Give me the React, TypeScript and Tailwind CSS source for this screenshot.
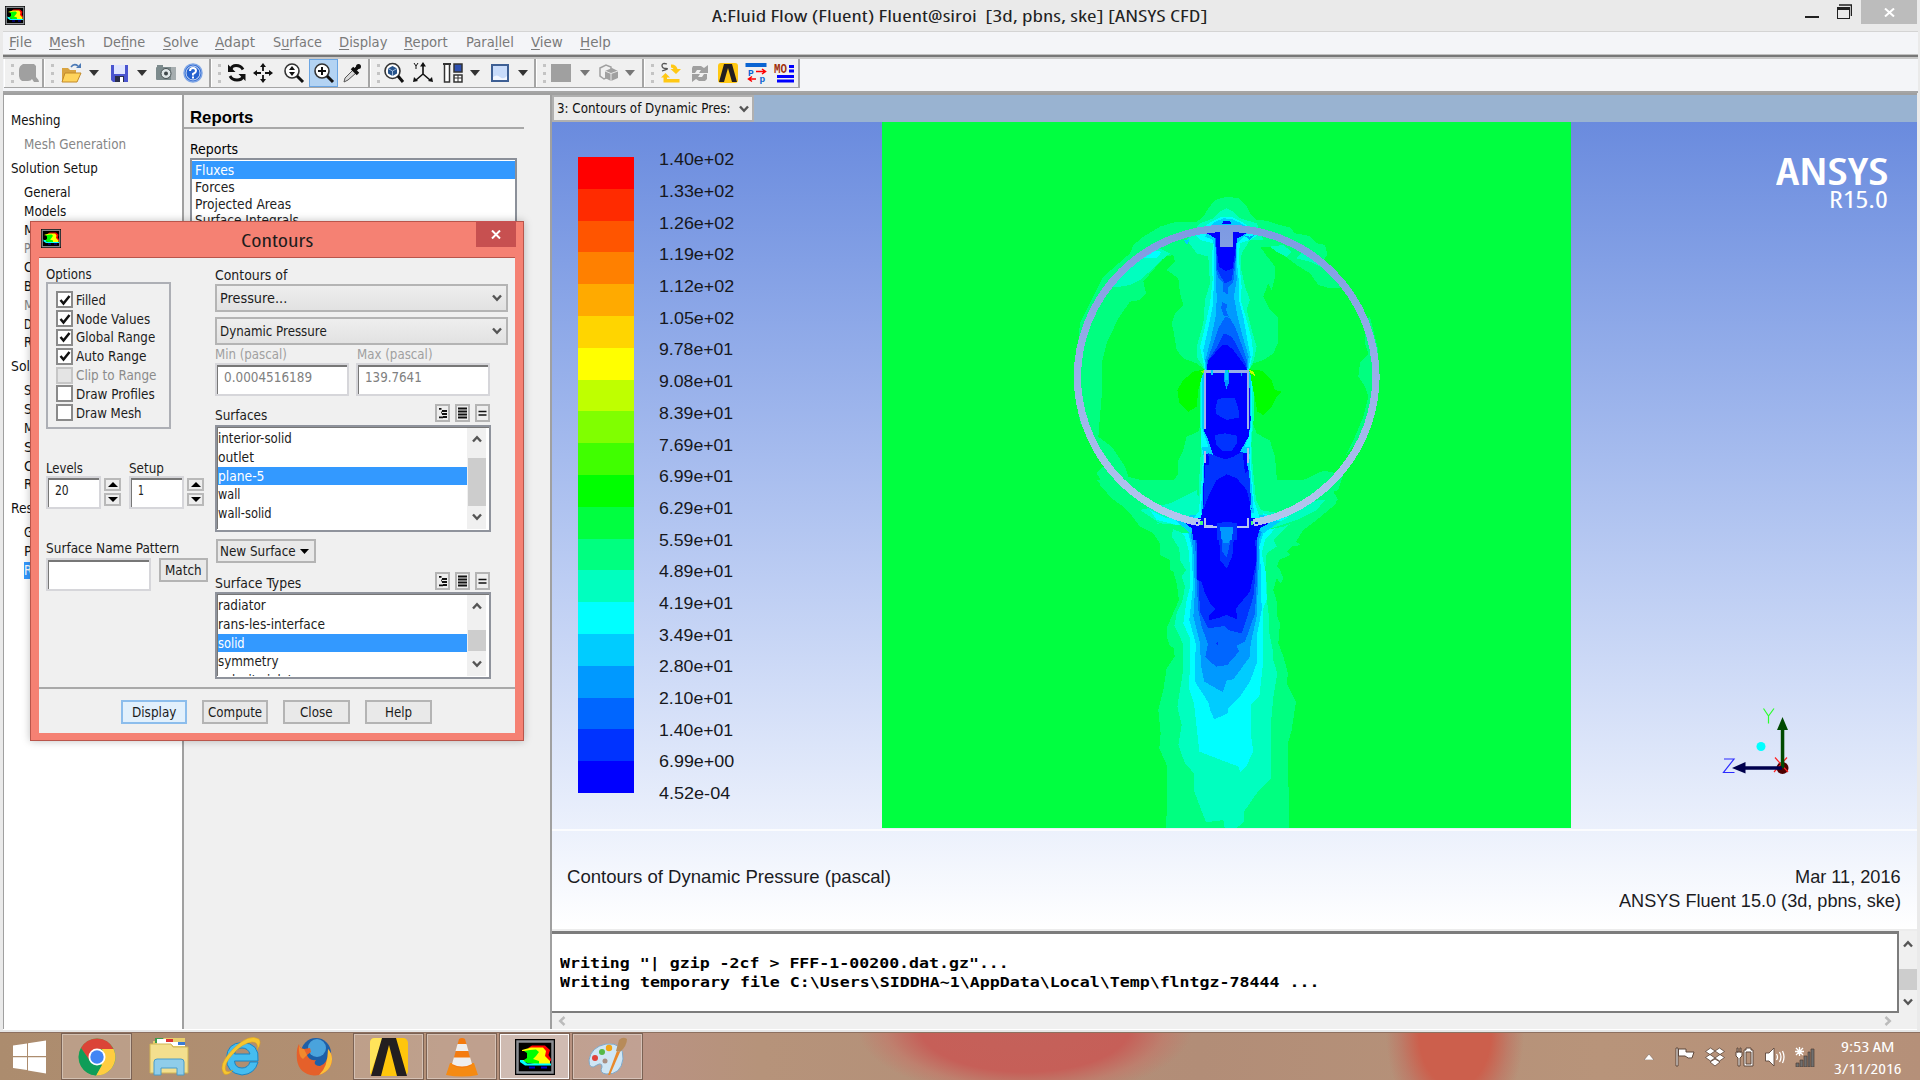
import { useLayoutEffect, useRef, useState, type ReactNode } from 'react';

const UI = 'font-["DejaVu_Sans_Condensed","DejaVu_Sans",sans-serif] [font-stretch:condensed]';

/* Single-line label fitted to a given width. */
function T({ w, className = '', children }: { w: number; className?: string; children: ReactNode }) {
  const ref = useRef<HTMLSpanElement>(null);
  const [s, setS] = useState(1);
  useLayoutEffect(() => {
    if (ref.current) setS(w / ref.current.offsetWidth);
  }, [w]);
  return (
    <span className={`block shrink-0 whitespace-pre ${className}`} style={{ width: w }}>
      <span ref={ref} className="inline-block origin-left" style={{ transform: `scaleX(${s})` }}>
        {children}
      </span>
    </span>
  );
}

function FluentIcon({ className }: { className: string }) {
  return (
    <svg viewBox="0 0 40 36" preserveAspectRatio="none" className={className}>
      <rect width="40" height="36" fill="#000" />
      <rect x="2.5" y="2.5" width="35" height="31" fill="none" stroke="#8a8d92" strokeWidth="2.5" />
      <path d="M13 9L17 6.500H30L35 11 33.500 16 36 20V22L28 24V9Z" fill="#f00" />
      <path d="M7 11L16 8.500 28 8.500 31 12 30 17 35 22V25L24 26 7 22Z" fill="#ff0" />
      <path d="M9 12L15 11 21 10.500 24 13 21 17 18 20 24 22 24 25 12 24 7 20Z" fill="#0f0" />
      <path d="M5 19L9 22 12 24.500 36 24.500 36 26.500 10 26.500 5 23Z" fill="#0ff" />
      <path d="M5 12H9L12 14V19L9 21H5Z" fill="#000" />
      <path d="M14 28.500h6M26 28.500h6" stroke="#00c" strokeWidth="2" />
    </svg>
  );
}

const MENU: [string, number, number, number][] = [
  ['File', 0, 23, 17], ['Mesh', 0, 36, 18], ['Define', 2, 42, 18], ['Solve', 0, 35, 17], ['Adapt', 0, 40, 18],
  ['Surface', 1, 49, 17], ['Display', 0, 48, 17], ['Report', 0, 44, 18], ['Parallel', 4, 48, 17], ['View', 0, 32, 17], ['Help', 0, 31, 0],
];

const Grip = () => (
  <div className="flex w-[15px] shrink-0 flex-col items-center gap-[5px] border-l border-white pt-[5px]">
    <i className="size-[3px] bg-[#c4c4c4]" /><i className="size-[3px] bg-[#c4c4c4]" /><i className="size-[3px] bg-[#c4c4c4]" />
  </div>
);
const Cell = ({ w, children, className = '' }: { w: number; children: ReactNode; className?: string }) => (
  <div className={`flex shrink-0 items-center justify-center ${className}`} style={{ width: w }}>{children}</div>
);
const Drop = ({ w, c = '#333' }: { w: number; c?: string }) => (
  <Cell w={w}><svg viewBox="0 0 10 6" className="h-[6px] w-[10px]"><path d="M0 0H10L5 6Z" fill={c} /></svg></Cell>
);
const Group = ({ w, children }: { w: number; children: ReactNode }) => (
  <div className="flex shrink-0 border-r-2 border-b border-[#a5a5a5] bg-[#f0f0f0]" style={{ width: w }}><Grip />{children}</div>
);
const Ic = ({ children }: { children: ReactNode }) => (
  <svg viewBox="0 0 20 20" className="size-[20px] shrink-0 overflow-visible">{children}</svg>
);

function Toolbar() {
  return (
    <div className="flex h-[29px] shrink-0 pl-[1px]">
      <Group w={40}>
        <Cell w={20}><Ic><path d="M4 1H15L17 3V14Q20 17 20 19H15L13 16Q12 18 9 18H3Q0 16 0 13V7Q0 3 4 1Z" fill="#a0a0a0" /></Ic></Cell>
      </Group>
      <Group w={167}>
        <Cell w={24}><Ic><path d="M1 5H7L9 7H15V18H1Z" fill="#d9a441" /><path d="M4 10H20L16 19H1Z" fill="#ffd45c" stroke="#c28a2a" /><path d="M10 4Q13 0 17 3" stroke="#4b79b5" strokeWidth="1.6" fill="none" /><path d="M15 5H20V0Z" fill="#4b79b5" /></Ic></Cell>
        <Drop w={22} />
        <Cell w={27}><Ic><path d="M2 2H19V19H4L2 17Z" fill="#4a55cf" /><rect x="5" y="2" width="11" height="9" fill="#dfe5ff" /><rect x="6" y="13" width="9" height="6" fill="#2b2f4a" /><rect x="11" y="14" width="3" height="5" fill="#fff" /></Ic></Cell>
        <Drop w={20} />
        <Cell w={27}><Ic><rect x="0" y="4" width="20" height="13" rx="1" fill="#7d8b8d" /><rect x="1" y="2" width="6" height="3" fill="#7d8b8d" /><rect x="15" y="4" width="5" height="13" fill="#a6adaf" /><circle cx="10" cy="10.500" r="5" fill="#dfe6e8" stroke="#495254" /><circle cx="10" cy="10.500" r="2" fill="#3f474a" /></Ic></Cell>
        <Cell w={28}><Ic><circle cx="10" cy="10" r="9" fill="#2462cf" stroke="#7fa6e6" strokeWidth="1.500" /><circle cx="10" cy="10" r="7" fill="none" stroke="#fff" strokeWidth=".8" /><path d="M7 8Q7 5 10 5T13 8Q13 9.500 10 11V12.500" fill="none" stroke="#fff" strokeWidth="2" /><rect x="9" y="13.500" width="2" height="2" fill="#fff" /></Ic></Cell>
      </Group>
      <Group w={159}>
        <Cell w={21}><Ic><path d="M16 6.500Q14 2.500 9 2.500Q5 2.500 4 6M3 13Q5 17 10 17Q15 17 16 13.500" fill="none" stroke="#111" strokeWidth="2.800" /><path d="M1 1.500V9H8.500ZM18.500 18V11H11.500Z" fill="#111" /></Ic></Cell>
        <Cell w={32}><Ic><path d="M10 3V8M10 12V17M3 10H8M12 10H17" stroke="#111" strokeWidth="1.800" /><path d="M10 0L13 4H7ZM10 20L7 16H13ZM0 10L4 7V13ZM20 10L16 7V13Z" fill="#111" /></Ic></Cell>
        <Cell w={30}><Ic><circle cx="8" cy="8" r="7" fill="#fff" stroke="#333" strokeWidth="1.600" /><path d="M13 13L19 19" stroke="#111" strokeWidth="3" /><path d="M8 3L11 7H5ZM8 13L5 9H11Z" fill="#111" /></Ic></Cell>
        <Cell w={29} className="border border-[#6aa5e3] bg-[#b3d3f3]"><Ic><circle cx="8" cy="8" r="7" fill="#fff" stroke="#333" strokeWidth="1.600" /><path d="M13 13L19 19" stroke="#111" strokeWidth="3" /><path d="M8 4V12M4 8H12" stroke="#111" strokeWidth="2" /></Ic></Cell>
        <Cell w={28}><Ic><path d="M2 19L3 15 11 7 14 10 6 17Z" fill="#d9d9d9" stroke="#555" /><path d="M10 5L16 11M12 8L16 4" stroke="#111" strokeWidth="3.500" /><circle cx="16.500" cy="3.500" r="2.500" fill="#111" /></Ic></Cell>
      </Group>
      <Group w={166}>
        <Cell w={18}><Ic><circle cx="8.500" cy="8" r="7.500" fill="#fff" stroke="#333" strokeWidth="1.600" /><path d="M14 13L19 19" stroke="#111" strokeWidth="3" /><path d="M8.500 3L13 5.500V10.500L8.500 13 4 10.500V5.500Z" fill="#27548c" /><path d="M4 5.500L8.500 8 13 5.500M8.500 8V13" stroke="#bcd3ef" strokeWidth=".8" fill="none" /></Ic></Cell>
        <Cell w={40}><Ic><path d="M10 1V11M10 11L3 17M10 11L17 17" stroke="#111" strokeWidth="1.600" fill="none" /><path d="M10-1L13 3.500H7ZM0 19L1 14 5 18ZM20 19L19 14 15 18Z" fill="#111" /><path d="M1 0L3 3 5 0M3 3V6" stroke="#111" fill="none" /></Ic></Cell>
        <Cell w={20}><Ic><rect x="1.500" y="1" width="5" height="18" fill="#fff" stroke="#333" strokeWidth="1.500" /><path d="M0 1H8" stroke="#333" strokeWidth="2" /><rect x="11" y="1" width="8" height="8" fill="#2d4faf" stroke="#333" strokeWidth="1.500" /><rect x="11" y="12" width="8" height="7" fill="#fff" stroke="#333" strokeWidth="1.500" /><path d="M15 12V19M11 15H19" stroke="#333" /></Ic></Cell>
        <Drop w={24} />
        <Cell w={26}><svg viewBox="0 0 18 18" className="size-[18px]"><rect x="1" y="1" width="16" height="16" fill="#c9dcfb" stroke="#3e5f94" strokeWidth="2" /><path d="M2 13Q6 10 9 13T16 12V16H2Z" fill="#f2f6ff" /></svg></Cell>
        <Drop w={20} />
      </Group>
      <Group w={108}>
        <Cell w={20}><i className="h-[18px] w-[20px] shrink-0 bg-[#a0a0a0]" /></Cell>
        <Drop w={28} c="#777" />
        <Cell w={20}><Ic><path d="M1 5L7 2 12 4V13L5 16 1 13Z" fill="none" stroke="#a0a0a0" strokeWidth="1.500" /><path d="M6 8L13 5 19 8V15L12 18 6 15Z" fill="#a0a0a0" /><path d="M6 8L12 10.500 19 8M12 10.500V18" stroke="#e8e8e8" fill="none" /></Ic></Cell>
        <Drop w={22} c="#777" />
      </Group>
      <Group w={156}>
        <Cell w={23}><Ic><path d="M10 1.500Q15 1 16.500 6L20 6 15 11 9.500 6H12.500Q12 4.500 10 4.500Z" fill="#ffc814" /><path d="M0 14.500L4.500 10 9 14.500H6V16H18.500V19.500H2.500V14.500Z" fill="#ffc814" /><path d="M6 1Q1-.5 1 2.500T5 5.500 1 8" stroke="#555" fill="none" strokeWidth="1.300" /></Ic></Cell>
        <Cell w={35}><Ic><path d="M3 3H11L14 5 18 2V10H9L11 7H7L5 10H2V5ZM17 11V16L15 18H9L6 16 2 19V11H10L8 14H12L14 11Z" fill="#a0a0a0" /></Ic></Cell>
        <Cell w={22}><Ic><rect width="20" height="20" rx="3" fill="#ffc814" /><path d="M1 19L6 1H14L19 19H14L10 5 6 19Z" fill="#231f20" /></Ic></Cell>
        <Cell w={34}><Ic><rect x="-.5" width="21" height="4" fill="#0a64d2" /><text x="2" y="13" fontSize="9.500" fontWeight="bold" fill="#0a64d2" fontFamily="Liberation Mono">P</text><text x="13.500" y="19" fontSize="9.500" fontWeight="bold" fill="#0a64d2" fontFamily="Liberation Mono">p</text><path d="M10 8.500H19M16 6L19.500 8.500 16 11M10 16H3M6 13.500L2.500 16 6 18.500" stroke="#f00" strokeWidth="1.500" fill="none" /></Ic></Cell>
        <Cell w={24}><Ic><text x="-1" y="9.500" fontSize="13" fontWeight="bold" fill="#a02f0c" fontFamily="Liberation Mono" textLength="13" lengthAdjust="spacingAndGlyphs">MO</text><path d="M14 3.500H19M14 8H19M2 13.500H19M2 18H19" stroke="#00f" strokeWidth="3" /></Ic></Cell>
      </Group>
    </div>
  );
}

/* [label, level, state] */
const TREE: [string, number, string?][] = [
  ['Meshing', 0], ['Mesh Generation', 1, 'off'], ['Solution Setup', 0], ['General', 1], ['Models', 1], ['Materials', 1], ['Phases', 1, 'off'],
  ['Cell Zone Conditions', 1], ['Boundary Conditions', 1], ['Mesh Interfaces', 1, 'off'], ['Dynamic Mesh', 1], ['Reference Values', 1],
  ['Solution', 0], ['Solution Methods', 1], ['Solution Controls', 1], ['Monitors', 1], ['Solution Initialization', 1],
  ['Calculation Activities', 1], ['Run Calculation', 1], ['Results', 0], ['Graphics and Animations', 1], ['Plots', 1], ['Reports', 1, 'sel'],
];
const TREE_W: Record<string, number> = { Meshing: 49, 'Mesh Generation': 102, 'Solution Setup': 87, General: 47, Models: 42 };

function Tree() {
  return (
    <div className="w-[179px] shrink-0 overflow-hidden border-t-2 border-l border-[#a0a0a0] bg-white pt-[11px]">
      {TREE.map(([t, lv, st], i) => (
        <div key={i} className={`flex items-center ${lv ? 'h-[18.800px] pl-[19.500px]' : 'h-[29.200px] pl-[7px]'}`}>
          <T w={TREE_W[t] ?? t.length * 6.3} className={`leading-[17px] ${st === 'off' ? 'text-[#868686]' : st === 'sel' ? 'bg-[#3399ff] text-white' : 'text-[#111]'}`}>{t}</T>
        </div>
      ))}
    </div>
  );
}

function ReportsPanel() {
  return (
    <div className="flex w-[368px] shrink-0 flex-col overflow-hidden border-t-2 border-l-2 border-[#a0a0a0] bg-[#f0f0f0]">
      <div className="mr-[26px] flex h-[34px] items-center border-b-2 border-[#a8a8a8] pt-[12px] pl-[6px]">
        <T w={63} className={'font-["Liberation_Sans",sans-serif] text-[16.500px] leading-[20px] font-bold text-black'}>Reports</T>
      </div>
      <div className="flex h-[29px] items-end pl-[6px]"><T w={48} className="leading-[18px]">Reports</T></div>
      <div className="ml-[6px] h-[90px] w-[327px] border-2 border-[#8b9099] bg-white pt-px text-[#222]">
        <div className="h-[18px] bg-[#3399ff] pl-[3px] leading-[19px] text-white"><T w={39}>Fluxes</T></div>
        <div className="h-[16.500px] pl-[3px] leading-[17px]"><T w={40}>Forces</T></div>
        <div className="h-[16.500px] pl-[3px] leading-[17px]"><T w={96}>Projected Areas</T></div>
        <div className="h-[16.500px] pl-[3px] leading-[16px]"><T w={104}>Surface Integrals</T></div>
      </div>
    </div>
  );
}

const COLORS = ['#ff0000', '#ff2b00', '#ff5500', '#ff8000', '#ffaa00', '#ffd500', '#ffff00', '#bfff00', '#80ff00', '#40ff00', '#00ff00', '#00ff40', '#00ff80', '#00ffbf', '#00ffff', '#00ccff', '#0099ff', '#0066ff', '#0033ff', '#0000ff'];
const VALUES = ['1.40e+02', '1.33e+02', '1.26e+02', '1.19e+02', '1.12e+02', '1.05e+02', '9.78e+01', '9.08e+01', '8.39e+01', '7.69e+01', '6.99e+01', '6.29e+01', '5.59e+01', '4.89e+01', '4.19e+01', '3.49e+01', '2.80e+01', '2.10e+01', '1.40e+01', '6.99e+00', '4.52e-04'];

const P = ({ f, d }: { f: string; d: string }) => <polygon fill={f} points={d} />;
const c1 = '#00ff80', c2 = '#00ffbf', c3 = '#00ffff', c4 = '#00ccff', c5 = '#0099ff', c6 = '#0066ff', c7 = '#0033ff', c8 = '#0000ff';

function Plot() {
  return (
    <svg viewBox="881 122 690 707" className="h-[707px] w-[690px] shrink-0" shapeRendering="crispEdges">
      <defs>
        <linearGradient id="sky" gradientUnits="userSpaceOnUse" x1="0" y1="-204" x2="0" y2="2221">
          <stop offset="0" stopColor="#6a8bde" /><stop offset="1" stopColor="#fff" />
        </linearGradient>
      </defs>
      <rect x="881.500" y="122" width="690" height="706" fill="#00ff40" />
      {/* wake below the body */}
      <g transform="translate(1130 500) scale(.33333)">
        <P f={c1} d="-100,-60 0,40 30,80 70,100 90,130 90,165 120,180 120,210 130,215 140,250 147,300 125,350 110,385 110,410 118,435 132,445 134,470 110,505 100,570 85,630 92,700 88,745 110,795 110,940 107,984 477,984 474,730 485,690 498,605 470,550 474,520 460,470 445,430 450,370 440,345 442,310 430,270 440,235 452,250 460,235 450,210 440,200 448,180 480,165 470,155 485,140 512,135 498,125 520,90 560,60 620,10 600,-60" />
        <P f={c2} d="60,30 80,70 130,85 125,110 148,145 150,180 168,210 155,230 165,260 158,300 140,340 133,378 145,400 158,430 158,520 142,620 155,675 145,735 165,790 192,820 192,872 228,967 280,960 284,984 320,984 342,965 342,935 380,880 422,838 422,680 430,590 442,520 430,480 428,450 418,400 417,350 412,310 410,250 405,215 410,160 440,140 430,120 470,80 510,50 500,0" />
        <P f={c3} d="110,50 150,95 165,110 178,160 180,260 170,300 160,370 180,415 178,570 192,610 208,755 326,800 330,817 348,800 370,755 362,700 362,615 388,590 400,480 400,370 398,330 410,300 408,220 395,160 405,120 440,80 460,50" />
        <P f={c4} d="140,60 175,100 187,150 188,270 178,360 197,430 195,545 237,610 240,630 253,658 293,640 293,625 330,590 360,545 380,490 382,400 395,330 392,200 388,140 400,100 430,60" />
        <P f={c5} d="160,65 182,100 190,150 195,270 190,350 210,430 213,495 223,545 278,576 290,542 310,538 360,470 362,430 380,350 386,200 386,120 410,65" />
        <P f={c6} d="175,70 195,110 200,250 205,330 215,380 234,432 226,472 258,500 292,495 327,455 320,437 345,425 375,340 382,220 382,110 400,70" />
        <P f={c7} d="182,75 198,100 206,250 210,335 235,385 285,378 295,390 335,400 350,355 370,290 380,180 380,100 390,75" />
        <P f={c8} d="185,70 200,105 202,240 215,245 225,280 240,310 257,328 238,345 238,360 262,355 290,345 322,358 318,325 360,275 378,190 375,80" />
        <P f={c7} d="258,75 268,120 270,180 290,205 307,170 310,130 318,75" />
        <P f={c6} d="266,82 275,110 277,155 290,172 300,130 308,82" />
        <P f={c5} d="275,80 280,128 298,130 302,80" />
        <P f={c7} d="257,430 264,426 264,438" />
      </g>
      <g transform="translate(1050 190) scale(.33333)">
        {/* outer shear regions */}
        <P f={c1} d="440,95 460,80 475,55 495,30 530,20 565,25 588,45 600,70 618,90 650,92 690,105 720,112 735,130 780,138 800,160 825,165 832,195 820,210 850,235 870,270 900,290 840,295 805,285 780,250 740,225 700,195 665,170 630,170 652,200 675,230 675,260 665,302 655,280 640,320 660,360 683,380 683,460 670,490 640,510 610,520 597,540 465,540 440,520 400,505 380,480 372,430 365,400 375,370 400,345 390,310 385,265 350,240 375,215 370,195 345,200 310,240 280,275 288,310 270,330 240,335 205,385 170,460 155,520 155,620 145,740 185,770 225,830 235,860 290,875 340,925 362,920 365,880 385,850 385,810 400,780 410,740 445,725 455,690 605,690 620,730 660,752 675,800 680,860 690,905 705,925 760,870 820,842 860,850 900,790 865,900 850,905 865,930 800,965 750,990 700,1010 600,1030 400,1030 300,990 240,965 185,925 150,885 152,870 140,850 160,830 200,850 90,700 75,560 90,400 160,260 240,190 250,165 280,140 330,110 380,95" />
        <P f={c1} d="960,380 945,390 945,460 955,492 930,518 925,560 945,590 955,620 940,680 915,740 885,800 940,730 985,600 985,480" />
        <P f={c2} d="185,290 210,290 240,285 270,270 310,235 335,210 360,190 330,175 280,185 230,230" />
        <P f={c3} d="270,205 295,180 335,185 320,205" />
        <P f={c2} d="660,170 700,165 725,185 710,200 680,185" />
        <P f={c2} d="740,205 780,215 820,235 800,215 760,185" />
        <P f={c2} d="270,960 360,940 440,900 450,960 440,1010 330,1000" />
        <P f={c2} d="630,960 690,970 750,935 825,930 800,960 740,990 650,1020 610,1010" />
        <P f={c3} d="300,960 350,985 430,985 430,1010 380,1005 320,990" />
        <P f={c3} d="640,970 690,985 720,980 660,1010 620,1010" />
        <P f={c4} d="370,985 430,975 455,960 455,1010 420,1030" />
        <P f={c4} d="690,995 640,975 610,960 610,1010 640,1030" />
        <P f={c8} d="400,995 440,985 470,960 600,960 625,985 665,995 630,1015 620,1050 430,1050 425,1015" />
        {/* upper stem */}
        <P f={c2} d="450,100 490,85 510,65 530,55 550,65 570,85 620,100 640,150 600,150 575,190 572,230 585,290 600,330 590,360 605,420 620,470 612,510 597,540 465,540 440,500 440,470 460,400 465,330 480,280 475,200 440,190 410,150" />
        <P f={c3} d="480,98 515,80 545,80 580,98 625,135 600,150 570,160 566,200 575,290 572,330 590,390 605,450 610,490 597,540 465,540 450,470 465,410 480,340 488,270 485,200 490,160 450,150 430,130" />
        <P f={c4} d="490,98 520,85 545,87 570,98 605,120 575,145 562,160 562,230 566,270 567,330 580,380 592,450 602,500 595,540 467,540 460,480 478,400 490,340 492,200 490,150 465,140" />
        <P f={c5} d="498,125 497,200 500,330 498,375 482,450 466,510 469,540 592,540 596,500 578,440 562,375 552,320 560,270 558,200 560,125" />
        <P f={c6} d="495,125 499,240 505,265 520,280 520,305 535,315 533,295 550,275 558,200 560,125" />
        <P f={c6} d="516,335 532,345 528,360 536,380 520,376 514,355" />
        <P f={c6} d="526,380 505,415 485,475 470,515 470,540 592,540 592,515 570,450 555,410 540,385" />
        <P f={c7} d="480,120 497,140 502,240 512,260 525,280 545,270 557,200 560,140 580,120" />
        <P f={c7} d="522,430 502,470 475,510 470,540 592,540 585,515 560,465 545,440" />
        <P f={c8} d="470,130 497,145 502,195 507,230 527,243 548,235 556,180 562,145 590,130 560,125 490,125" />
        <P f={c8} d="518,463 490,495 474,512 470,540 592,540 580,520 550,480 535,467" />
        <P f={c8} d="515,103 520,94 540,94 545,103" />
        <P f={c4} d="400,150 418,148 412,165" />
        <P f={c5} d="580,135 600,140 615,135 600,150" />
        {/* central body */}
        <P f={c2} d="450,545 450,700 456,750 450,820 445,930 425,975 640,975 618,930 608,830 604,760 612,680 610,580 603,545" />
        <P f={c3} d="454,545 454,700 454,770 459,800 453,900 446,965 430,985 630,985 612,930 603,820 603,750 607,690 606,580 600,545" />
        <P f={c4} d="457,550 457,715 475,770 455,770 462,800 457,900 452,970 612,970 606,900 598,800 600,770 585,770 603,710 602,550" />
        <P f={c8} d="462,550 597,550 602,690 596,740 570,785 590,790 603,980 615,1000 445,1000 457,970 464,790 490,795 475,750 461,720" />
        <P f={c7} d="490,795 525,808 550,800 578,785 585,850 597,840 603,930 605,960 590,900 560,865 530,853 500,870 475,920 460,960 465,825 478,825 475,790" />
        <P f={c7} d="503,628 520,624 555,625 565,655 568,682 530,690 500,673 496,655" />
        <P f={c7} d="495,735 525,730 560,737 560,760 545,783 515,782 498,765" />
        <P f={c5} d="523,545 536,545 536,580 529,598 523,575" />
        <P f={c4} d="525,540 534,540 534,570 526,570" />
        <P f={c4} d="483,540 489,540 488,556 484,556" />
        <P f={c5} d="572,548 575,548 575,558 572,558" />
        <P f={c7} d="500,1000 530,995 560,1000 560,1050 500,1050" />
        <P f={c5} d="510,1012 550,1012 545,1050 515,1050" />
        <P f="#00ff00" d="462,538 430,545 400,570 382,600 388,640 415,665 440,650 445,600 456,560" />
        <P f="#00ff00" d="598,538 635,542 665,570 675,600 695,605 680,620 665,650 640,675 622,665 610,600" />
        <P f="#80ff00" d="452,545 468,538 462,550" />
        <P f="#bfff00" d="596,538 612,546 615,558 600,548" />
        {/* solid walls */}
        <path d="M450 998A448 448 0 0 1 82 560A448 448 0 0 1 530 115A448 448 0 0 1 978 560A448 448 0 0 1 610 998" fill="none" stroke="url(#sky)" strokeWidth="22" />
        <path d="M510 104H550V171H510ZM462 539H483V550H462ZM489 539H524V549H489ZM537 539H597V549H537ZM461 550H468V717H461ZM591 550H598V717H591ZM461 782H467V820H461ZM591 775H597V820H591ZM461 985H468V1004L500 1008V1015H462ZM591 985H598V1015H560V1008H591Z" fill="url(#sky)" />
        <rect x="437" y="996" width="7" height="5" fill="#00f" /><rect x="616" y="996" width="7" height="5" fill="#00f" />
        <rect x="451" y="992" width="7" height="14" fill="#40ff80" /><rect x="602" y="992" width="6" height="14" fill="#40ff80" />
      </g>
    </svg>
  );
}

function Triad() {
  return (
    <svg viewBox="1715 700 85 85" className="absolute top-[578px] left-[1163px] size-[85px]">
      <circle cx="1782.500" cy="768" r="6" fill="#4d0000" />
      <g fill="none" strokeWidth="1.200">
        <path d="M1763.500 708.500L1768.500 716L1774 708.500M1768.500 716V723.500" stroke="#2bff2b" />
        <path d="M1724 759H1734L1723.500 772.500H1734.500" stroke="#2b2bff" />
        <path d="M1775 757.500L1788 772M1787 757.500L1774 772" stroke="#f22" />
      </g>
      <path d="M1780.800 768V730H1777L1782.500 717 1788 730H1784.300V768Z" fill="#004a00" />
      <path d="M1782 766.200H1745.500V762L1732 768 1745.500 773.500V769.700H1782Z" fill="#00004d" />
      <circle cx="1761" cy="746.500" r="4.500" fill="#0ff" />
    </svg>
  );
}

const Chev = ({ up, c = '#555' }: { up?: boolean; c?: string }) => (
  <svg viewBox="0 0 10 8" className={`h-[8px] w-[10px] shrink-0 ${up ? 'rotate-180' : ''}`}><path d="M1 1.500L5 5.800L9 1.500" fill="none" stroke={c} strokeWidth="2.400" /></svg>
);

function Graphics() {
  return (
    <div className="flex min-w-0 grow flex-col border-t-2 border-l-2 border-[#a0a0a0]">
      <div className="flex h-[27px] shrink-0 bg-[#99b3d1]">
        <div className="flex w-[202px] items-center justify-between border-2 border-[#b0b0b0] bg-[#ececec] pr-[3px] pl-[3px] text-[#111]">
          <T w={173}>3: Contours of Dynamic Pres:</T><Chev />
        </div>
      </div>
      <div className="relative flex h-[807px] shrink-0 flex-col bg-linear-to-b from-[#6a8bde] to-white">
        <div className="flex h-[707px] shrink-0">
          <div className="flex w-[329px] shrink-0 pl-[26px]">
            <div className="mt-[35px] flex h-[636px] w-[56px] flex-col">
              {COLORS.map((c) => <i key={c} className="grow" style={{ background: c }} />)}
            </div>
            <div className={'mt-[22.500px] ml-[25px] flex flex-col font-["Liberation_Sans",sans-serif] text-[16px] text-[#16181d]'}>
              {VALUES.map((v, i) => <div key={i} className="flex h-[31.700px] items-center"><T w={i === 20 ? 71 : i < 6 || i === 19 ? 75 : 74}>{v}</T></div>)}
            </div>
          </div>
          <Plot />
          <div className="flex grow flex-col items-end pt-[28px] pr-[29px] text-white">
            <T w={112} className={'font-["Open_Sans",sans-serif] text-[38px] leading-[40px] font-semibold'}>ANSYS</T>
            <T w={59} className={'font-["Open_Sans",sans-serif] text-[23px] leading-[19px]'}>R15.0</T>
          </div>
        </div>
        <div className="h-[2px] bg-white/80" />
        <div className={'flex grow justify-between pt-[34px] pr-[16px] pl-[15px] font-["Liberation_Sans",sans-serif] text-[18.500px] leading-[24px] text-[#1b1b1f]'}>
          <T w={324}>Contours of Dynamic Pressure (pascal)</T>
          <div className="flex flex-col items-end">
            <T w={106}>Mar 11, 2016</T>
            <T w={282}>ANSYS Fluent 15.0 (3d, pbns, ske)</T>
          </div>
        </div>
        <Triad />
      </div>
      <div className="h-[2px] shrink-0 bg-[#ececec]" />
      <div className="flex h-[82px] shrink-0">
        <div className={'grow border-t-[3px] border-r-2 border-b-2 border-[#7c7c7c] bg-white pt-[20px] pl-[8px] font-["DejaVu_Sans_Mono",monospace] text-[14.500px] leading-[19px] font-bold text-black'}>
          <T w={449}>{'Writing "| gzip -2cf > FFF-1-00200.dat.gz"...'}</T>
          <T w={759}>{'Writing temporary file C:\\Users\\SIDDHA~1\\AppData\\Local\\Temp\\flntgz-78444 ...'}</T>
        </div>
        <div className="flex w-[18px] flex-col items-center bg-[#f0f0f0] pt-[9px]">
          <Chev up /><i className="mt-[21px] h-[21px] w-[18px] bg-[#cdcdcd]" /><i className="h-[8px]" /><Chev />
        </div>
      </div>
      <div className="flex grow items-center justify-between bg-[#f0f0f0] pr-[24px] pl-[5px]">
        <span className="rotate-90"><Chev c="#bbb" /></span><span className="-rotate-90"><Chev c="#bbb" /></span>
      </div>
    </div>
  );
}

const CHECKS: [string, number, string][] = [
  ['Filled', 30, 'on'], ['Node Values', 74, 'on'], ['Global Range', 79, 'on'], ['Auto Range', 71, 'on'], ['Clip to Range', 80, 'off'], ['Draw Profiles', 79, ''], ['Draw Mesh', 66, ''],
];
const Combo = ({ t, w }: { t: string; w: number }) => (
  <div className="flex h-[28px] w-[293px] items-center justify-between border-2 border-[#b4b4b4] bg-linear-to-b from-[#eee] to-[#e2e2e2] pr-[4px] pl-[3px]"><T w={w}>{t}</T><Chev /></div>
);
const Field = ({ className, t, w, text = '' }: { className: string; t?: string; w?: number; text?: string }) => (
  <div className={`flex h-[33px] border-2 border-[#d6d6da] bg-white ${className}`}>
    <div className={`flex grow items-center border-t-2 border-l border-[#777] pb-[8px] pl-[6px] ${text}`}>{t && <T w={w!}>{t}</T>}</div>
  </div>
);
const Btn = ({ t, w, className }: { t: string; w: number; className: string }) => (
  <div className={`flex h-[24px] items-center justify-center border-2 ${className}`}><T w={w}>{t}</T></div>
);
const Mini = ({ d, sw }: { d: string; sw: number }) => (
  <div className="flex h-[18px] w-[15px] items-center justify-center border-2 border-[#b4b4b4] bg-[#eee]"><svg viewBox="0 0 9 12" className="h-[12px] w-[9px]"><path d={d} stroke="#111" strokeWidth={sw} fill="none" /></svg></div>
);
const Minis = () => (
  <div className="flex gap-[5px]"><Mini sw={1.8} d="M1 1.800H3.500M4 4H9M4 7H9M1 10.300H5M3.200 5.500H4M5 10H9" /><Mini sw={2.1} d="M0 1.500H9M0 4.500H9M0 7.500H9M0 10.500H9" /><Mini sw={1.3} d="M.5 4.500H8.500M.5 8H8.500" /></div>
);
const Spin = () => (
  <div className="ml-[3px] flex w-[17px] flex-col gap-[2px] pt-[2px]">
    {['M0 5L5 0L10 5Z', 'M0 0L5 5L10 0Z'].map((d) => <div key={d} className="flex h-[13px] items-center justify-center border-2 border-[#b9b9b9] bg-[#eee]"><svg viewBox="0 0 10 5" className="h-[5px] w-[10px]"><path d={d} /></svg></div>)}
  </div>
);
function List({ rows, sel, h, thumb }: { rows: [string, number][]; sel: number; h: string; thumb: ReactNode }) {
  return (
    <div className={`flex w-[276px] shrink-0 overflow-hidden border-2 border-[#8f939c] bg-white ${h}`}>
      <div className="mb-px flex grow overflow-hidden border-t border-l border-[#777]">
        <div className="w-[249px] shrink-0 pt-[1px]">
          {rows.map(([t, w], i) => <div key={t} className={`h-[18.800px] leading-[18px] ${i === sel ? 'bg-[#3399ff] text-white' : ''}`}><T w={w}>{t}</T></div>)}
        </div>
        <div className="flex w-[19px] flex-col items-center bg-[#f0f0f0] pt-[7px]">{thumb}</div>
      </div>
    </div>
  );
}

function Dialog() {
  return (
    <div className="absolute top-[221px] left-[30px] flex h-[520px] w-[494px] flex-col border border-[#b9554b] bg-[#f58173] px-[8px] pb-[7px] text-[#1c1c1c] shadow-[0_0_8px_rgba(0,0,0,.25)]">
      <div className="flex h-[35px] shrink-0 items-start justify-between">
        <FluentIcon className="mt-[7px] ml-[2px] h-[19px] w-[20px]" />
        <T w={73} className={'ml-[18px] mt-[6px] font-["Open_Sans",sans-serif] text-[17.500px] leading-[24px]'}>Contours</T>
        <div className="-mt-px -mr-px flex h-[26px] w-[40px] items-center justify-center bg-[#c75050]"><svg viewBox="0 0 10 9" className="h-[9px] w-[10px]"><path d="M1 .5L9 8.500M9 .5L1 8.500" stroke="#fff" strokeWidth="2" /></svg></div>
      </div>
      <div className="flex grow flex-col border-t border-[#b9554b] bg-[#f0f0f0]">
        <div className="flex h-[431px] shrink-0 border-b-2 border-[#a9a9a9]">
          <div className="w-[169px] shrink-0 pt-[7px] pl-[7px] leading-[18px]">
            <T w={46}>Options</T>
            <div className="-mt-px h-[147px] w-[125px] border-2 border-[#adafb5] pt-[6.500px] pl-[8px]">
              {CHECKS.map(([t, w, st]) => (
                <div key={t} className={`flex h-[18.800px] items-center gap-[3px] ${st === 'off' ? 'text-[#8b8b8b]' : ''}`}>
                  <span className={`flex size-[17px] items-center justify-center border-2 ${st === 'off' ? 'border-[#c6c6c6] bg-[#e4e4e4]' : 'border-[#8a8a8a] bg-white'}`}>
                    {st === 'on' && <svg viewBox="0 0 12 12" className="size-[12px] shrink-0"><path d="M1.500 6L4.500 9.500L10.500 2" fill="none" stroke="#111" strokeWidth="2.500" /></svg>}
                  </span>
                  <T w={w}>{t}</T>
                </div>
              ))}
            </div>
            <div className="mt-[30px] flex h-[17px] gap-[46px]"><T w={37}>Levels</T><T w={35}>Setup</T></div>
            <div className="flex"><Field className="w-[55px]" t="20" w={14} /><Spin /><Field className="ml-[8px] w-[55px]" t="1" w={6} /><Spin /></div>
            <div className="mt-[30px] h-[19px]"><T w={133}>Surface Name Pattern</T></div>
            <div className="flex gap-[8px]"><Field className="w-[105px]" /><Btn t="Match" w={37} className="w-[49px] border-[#b4b4b4] bg-[#e9e9e9]" /></div>
          </div>
          <div className="flex w-[300px] flex-col pt-[8px] pl-[7px] leading-[18px]">
            <T w={72}>Contours of</T>
            <Combo t="Pressure..." w={67} />
            <div className="h-[5px]" />
            <Combo t="Dynamic Pressure" w={107} />
            <div className="flex h-[18px] gap-[70px] text-[#a0a0a0]"><T w={72}>Min (pascal)</T><T w={76}>Max (pascal)</T></div>
            <div className="flex gap-[7px]"><Field className="w-[134px]" t="0.0004516189" w={88} text="text-[#808080]" /><Field className="w-[134px]" t="139.7641" w={57} text="text-[#808080]" /></div>
            <div className="flex h-[29px] w-[275px] items-start justify-between pt-[8px]"><span className="pt-[2px]"><T w={52}>Surfaces</T></span><Minis /></div>
            <List h="h-[107px]" sel={2} rows={[['interior-solid', 74], ['outlet', 36], ['plane-5', 46], ['wall', 22], ['wall-solid', 54]]}
              thumb={<><Chev up /><i className="mt-[15px] h-[48px] w-[18px] bg-[#cdcdcd]" /><i className="h-[7px]" /><Chev /></>} />
            <div className="mt-[7px] ml-[1px] flex h-[24px] w-[100px] shrink-0 items-center gap-[4px] border-2 border-[#b4b4b4] bg-[#e9e9e9] pl-[2px]"><T w={76}>New Surface</T><svg viewBox="0 0 9 5" className="h-[5px] w-[9px] shrink-0"><path d="M0 0H9L4.500 5Z" /></svg></div>
            <div className="flex h-[29px] w-[275px] items-start justify-between pt-[9px]"><span className="pt-[2px]"><T w={86}>Surface Types</T></span><Minis /></div>
            <List h="h-[87px]" sel={2} rows={[['radiator', 48], ['rans-les-interface', 107], ['solid', 27], ['symmetry', 60], ['velocity-inlet', 74]]}
              thumb={<><Chev up /><i className="mt-[20px] h-[21px] w-[18px] bg-[#cdcdcd]" /><i className="h-[9px]" /><Chev /></>} />
          </div>
        </div>
        <div className="flex gap-[15px] pt-[11px] pl-[82px]">
          <Btn t="Display" w={44} className="w-[66px] border-[#8cbdec] bg-[#e2f0fc]" />
          <Btn t="Compute" w={54} className="w-[66px] border-[#b4b4b4] bg-[#e9e9e9]" />
          <Btn t="Close" w={33} className="w-[67px] border-[#b4b4b4] bg-[#e9e9e9]" />
          <Btn t="Help" w={27} className="w-[67px] border-[#b4b4b4] bg-[#e9e9e9]" />
        </div>
      </div>
    </div>
  );
}

const Task = ({ w, state = '', children }: { w: number; state?: string; children: ReactNode }) => (
  <div className={`flex h-[47px] shrink-0 items-center justify-center ${state}`} style={{ width: w }}>{children}</div>
);
const OPEN = 'border border-[#7b6254] bg-[#cbb3a7]/45 shadow-[inset_0_0_0_1px_rgba(255,255,255,.35)] mr-[2px]';
const ACTIVE = 'border border-[#7b6254] bg-[#d6c6bf]/80 shadow-[inset_0_0_0_1px_rgba(255,255,255,.9)] mr-[2px]';

function Taskbar() {
  return (
    <div className="flex h-[48px] shrink-0 overflow-hidden border-t border-[#8d7060] bg-[radial-gradient(ellipse_140px_60px_at_1025px_-6px,#c4615a_0%,#c65f58_75%,#c8706480_100%,transparent_120%),radial-gradient(ellipse_60px_90px_at_1455px_0px,#cc5f4c_60%,#c4685880_90%,transparent_115%),linear-gradient(90deg,#ac8c6e_0px,#b18f72_330px,#b99283_640px,#b6937a_760px,#b28d77_1200px,#b8947a_1600px,#b59079_1920px)]">
      <Task w={61}><svg viewBox="0 0 33 33" className="h-[34px] w-[33px] -translate-x-[1px]"><path d="M0 5L14 3V15.500H0ZM15 2.800L33 0V15.500H15ZM0 16.800H14V29.500L0 27.500ZM15 16.800H33V33L15 30Z" fill="#fff" /></svg></Task>
      <Task w={71} state={OPEN}>
        <svg viewBox="0 0 38 38" className="size-[38px]"><circle cx="19" cy="19" r="18.500" fill="#4caf50" /><path d="M19 .5A18.500 18.500 0 0 1 35.500 11H19L11 22 3 10A18.500 18.500 0 0 1 19 .5Z" fill="#db4437" /><path d="M35.500 11A18.500 18.500 0 0 1 18 37.500L27 19 24 11Z" fill="#ffcd40" /><path d="M3 10A18.500 18.500 0 0 0 18 37.500L24 27 12 23Z" fill="#0f9d58" /><circle cx="19" cy="19" r="8.500" fill="#fff" /><circle cx="19" cy="19" r="6.700" fill="#4285f4" /></svg>
      </Task>
      <Task w={70}>
        <svg viewBox="0 0 40 40" className="size-[40px]"><path d="M4 4H13L15 1H36V20H4Z" fill="#e9cf6d" /><path d="M6 1H14V6H6Z" fill="#3c9b4a" /><path d="M8 2H24V8H8Z" fill="#fff" /><path d="M17 2H24V5H17Z" fill="#d33" /><path d="M24 5H36V9H24Z" fill="#fff" /><path d="M29 5H36V8H29Z" fill="#3a7bd5" /><path d="M1 7H22L24 10H39V36H1Z" fill="#f3df8e" stroke="#d0b555" /><path d="M5 25Q5 22 8 22H32Q35 22 35 25V38H28V31H12V38H5Z" fill="#8fcdea" stroke="#4a9cc8" /></svg>
      </Task>
      <Task w={73}>
        <svg viewBox="0 0 40 40" className="size-[40px]"><path d="M37 25H29Q27 31 21 31Q14 31 13.500 24H37Q39 6 21 5.500Q6 6 5.500 21T21 38Q34 37 37 25ZM13.500 17Q15 11 21 11T29 17Z" fill="#45bdf0" stroke="#1b84c4" /><path d="M3 37Q-4 28 12 12T38 2Q41 6 36 13Q38 5 31 5Q22 6 12 17T5 34Q8 36 12 33Q7 39 3 37Z" fill="#f6c62f" stroke="#d89c1c" strokeWidth=".5" /></svg>
      </Task>
      <Task w={73}>
        <svg viewBox="0 0 40 40" className="size-[40px]"><circle cx="22" cy="16" r="15" fill="#1d5fa8" /><circle cx="23" cy="11" r="9" fill="#4aa3dc" /><path d="M5 7Q5 11 10 12L16 11 17 15 13 18Q15 24 22 23Q18 28 26 29Q35 26 34 12Q41 20 36 30Q30 39 20 38.500Q5 37 3 23Q2 12 5 7Z" fill="#e5602a" /><path d="M34 12Q41 20 36 30Q32 36 25 38Q34 30 34 12Z" fill="#fbbf3a" /><path d="M5 7Q5 12 10 12L13 18 9 22Q4 20 5 7Z" fill="#f08a2d" /></svg>
      </Task>
      <div className="w-[3px]" />
      <Task w={71} state={OPEN}>
        <svg viewBox="0 0 40 40" className="size-[40px]"><rect x="1" y="1" width="38" height="38" rx="5" fill="#ffc60b" /><path d="M1 6Q1 1 6 1H14L1 38Z" fill="#ffe45a" /><path d="M2 39L13 1H27L38 39H28L20 8 12 39Z" fill="#231f20" /></svg>
      </Task>
      <Task w={71} state={OPEN}>
        <svg viewBox="0 0 34 40" className="h-[40px] w-[34px]"><path d="M5 26H29L33 38Q17 41 1 38Z" fill="#f58a12" /><path d="M14 2Q17 0 20 2L27 28Q17 34 7 28Z" fill="#f47b0f" /><path d="M12.500 7H21.500L23.500 14H10.500ZM8.800 20.500H25.200L27 27Q17 32 7 27Z" fill="#eee" /></svg>
      </Task>
      <Task w={71} state={ACTIVE}><FluentIcon className="h-[36px] w-[40px]" /></Task>
      <Task w={71} state={OPEN}>
        <svg viewBox="0 0 40 40" className="size-[40px]"><path d="M18 7Q36 5 35 22Q33 38 18 37Q11 36 14 30Q14 25 9 28Q1 34 1 23Q3 10 18 7Z" fill="#cfe6f5" stroke="#7fa9c9" /><circle cx="7" cy="21" r="3" fill="#e0413a" /><circle cx="14" cy="15" r="3" fill="#55b948" /><circle cx="21" cy="11" r="3.200" fill="#f2a516" /><circle cx="17" cy="24" r="2.500" fill="#a98f83" /><path d="M20 38L29 14 32 15 22 38Z" fill="#e8892b" /><path d="M28 14L31 3Q35-1 39 2 39 9 32 15Z" fill="#b78b5a" /></svg>
      </Task>
      <div className="grow" />
      <div className="flex items-center gap-[10px]">
        <svg viewBox="0 0 10 6" className="mr-[11px] h-[6px] w-[10px]"><path d="M0 6L5 0L10 6Z" fill="#fff" stroke="#6b5a52" strokeWidth=".5" /></svg>
        <svg viewBox="0 0 20 20" className="size-[20px]" fill="#fff" stroke="#5c463b" strokeWidth="1"><path d="M1 1H3V19H1Z" /><path d="M3.500 2H11V5H19L17 11Q13 12 10 9H3.500Z" /></svg>
        <svg viewBox="0 0 20 20" className="size-[20px]" fill="#fff" stroke="#5c463b" strokeWidth=".8"><path d="M5.500 1L10 4 5 7.500 .5 4.500ZM14.500 1L19.500 4.500 15 7.500 10 4ZM5 7.500L10 11 5.500 14 .5 10.500ZM15 7.500L19.500 10.500 14.500 14 10 11ZM10 12L15 15 10 19 5 15Z" /></svg>
        <svg viewBox="0 0 20 20" className="size-[20px]" fill="#fff" stroke="#5c463b"><path d="M1 5H7V9L5 11V19H3V11L1 9ZM2 1H3V5H2ZM5 1H6V5H5Z" /><path d="M9 3H11V1H16V3H18V19H9Z" /><path d="M11 5H16V17H11Z" fill="#b69279" /></svg>
        <svg viewBox="0 0 20 20" className="size-[20px]" fill="#fff" stroke="#5c463b" strokeWidth=".9"><path d="M.5 6H4L9 1V19L4 14H.5Z" /><path d="M11.500 7Q13.500 10 11.500 13M14.500 5Q17.500 10 14.500 15M17.500 4Q20.500 10 17.500 16" fill="none" stroke="#fff" strokeWidth="1.300" /></svg>
        <svg viewBox="0 0 20 20" className="size-[20px]"><path d="M1 16H4V20H1ZM5 13H8V20H5ZM9 9H12V20H9ZM13 5H15V20H13ZM16 2H19V20H16Z" fill="#6f6f6f" stroke="#4d3d35" strokeWidth=".7" /><path d="M4.500 0V9M0 4.500H9M1 1L8 8M8 1L1 8" stroke="#fff" strokeWidth="1.300" /></svg>
      </div>
      <div className={'mr-[18px] ml-[18px] flex w-[69px] flex-col items-center pt-[2px] font-["Open_Sans",sans-serif] text-[15px] leading-[22px] text-white'}>
        <T w={54}>9:53 AM</T><T w={68}>3/11/2016</T>
      </div>
    </div>
  );
}

export default function App() {
  return (
    <div className={`relative flex h-[1080px] w-[1920px] flex-col overflow-hidden bg-[#eaeaea] text-[13.700px] ${UI}`}>
      <div className="flex h-[31px] shrink-0 items-start pl-[5px]">
        <FluentIcon className="mt-[6px] h-[19px] w-[20px]" />
        <T w={495} className={'ml-[687px] mt-[4px] font-["Open_Sans",sans-serif] text-[17px] leading-[24px] text-[#222]'}>{'A:Fluid Flow (Fluent) Fluent@siroi  [3d, pbns, ske] [ANSYS CFD]'}</T>
        <div className="grow" />
        <i className="mt-[16px] h-[2px] w-[14px] bg-[#222]" />
        <svg viewBox="0 0 15 15" className="mt-[4px] mr-[9px] ml-[18px] size-[15px]" fill="none" stroke="#222"><path d="M2 1H14.500V12" strokeWidth="1.500" /><rect x=".5" y="3.500" width="12" height="11" /><path d="M0 4.500H13" strokeWidth="3" /></svg>
        <div className="mr-[3px] flex h-[24px] w-[56px] items-center justify-center bg-[#bcbcbc]"><svg viewBox="0 0 11 9" className="h-[9px] w-[11px]"><path d="M1 .5L10 8.500M10 .5L1 8.500" stroke="#fff" strokeWidth="2" /></svg></div>
      </div>
      <div className="mr-[2px] ml-[3px] flex h-[23px] shrink-0 items-center border-t border-[#d4d4d4] bg-[#f4f5f8] pb-[2px] pl-[6px] text-[14px] text-[#7a7a7a]">
        {MENU.map(([t, u, w, g]) => (
          <div key={t} className="flex"><T w={w}>{t.slice(0, u)}<span className="underline underline-offset-2">{t[u]}</span>{t.slice(u + 1)}</T><i style={{ width: g }} /></div>
        ))}
      </div>
      <div className="mr-[2px] ml-[3px] h-[5px] shrink-0 border-t border-b-2 border-t-[#c0c0c0] border-b-[#c8c8c8] bg-[#777]" />
      <div className="mr-[2px] ml-[3px] flex h-[34px] shrink-0 flex-col border-b-2 border-[#a5a5a5] bg-[#f4f5f8]"><Toolbar /></div>
      <div className="mr-[3px] ml-[3px] flex h-[937px] shrink-0 border-b border-white bg-[#f4f4f4]">
        <Tree />
        <ReportsPanel />
        <Graphics />
      </div>
      <div className="h-[2px] shrink-0 bg-[#e6e6e6]" />
      <Taskbar />
      <Dialog />
    </div>
  );
}
